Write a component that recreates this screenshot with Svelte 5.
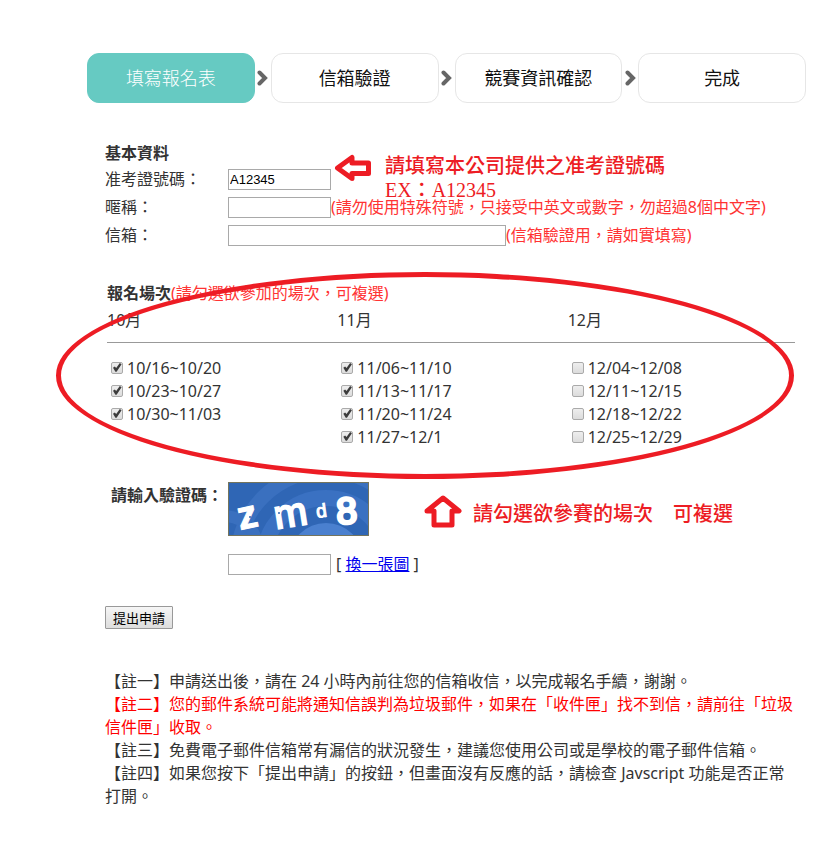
<script>
	const steps = ['填寫報名表', '信箱驗證', '競賽資訊確認', '完成'];

	let examNo = 'A12345';
	let nickname = '';
	let email = '';
	let captcha = '';

	let months = [
		{
			name: '10月',
			sessions: [
				{ label: '10/16~10/20', checked: true },
				{ label: '10/23~10/27', checked: true },
				{ label: '10/30~11/03', checked: true }
			]
		},
		{
			name: '11月',
			sessions: [
				{ label: '11/06~11/10', checked: true },
				{ label: '11/13~11/17', checked: true },
				{ label: '11/20~11/24', checked: true },
				{ label: '11/27~12/1', checked: true }
			]
		},
		{
			name: '12月',
			sessions: [
				{ label: '12/04~12/08', checked: false },
				{ label: '12/11~12/15', checked: false },
				{ label: '12/18~12/22', checked: false },
				{ label: '12/25~12/29', checked: false }
			]
		}
	];

	// \uff0c is the full-width comma
	const notes = [
		{
			text: '【註一】申請送出後\uff0c請在 24 小時內前往您的信箱收信\uff0c以完成報名手續\uff0c謝謝。'
		},
		{
			text: '【註二】您的郵件系統可能將通知信誤判為垃圾郵件\uff0c如果在「收件匣」找不到信\uff0c請前往「垃圾信件匣」收取。',
			important: true
		},
		{
			text: '【註三】免費電子郵件信箱常有漏信的狀況發生\uff0c建議您使用公司或是學校的電子郵件信箱。'
		},
		{
			text: '【註四】如果您按下「提出申請」的按鈕\uff0c但畫面沒有反應的話\uff0c請檢查 Javscript 功能是否正常打開。'
		}
	];
</script>

<main lang="zh-Hant">
	<ol class="steps">
		{#each steps as step, i}
			{#if i > 0}
				<li class="chevron" aria-hidden="true">
					<svg width="11" height="16" viewBox="0 0 11 16">
						<path d="M2.5 2.5 L8 8 L2.5 13.5" />
					</svg>
				</li>
			{/if}
			<li class="step" class:active={i === 0}>{step}</li>
		{/each}
	</ol>

	<form on:submit|preventDefault>
		<section class="basic">
			<h2>基本資料</h2>
			<div class="row">
				<label for="exam">准考證號碼&#xff1a;</label>
				<input id="exam" class="text" type="text" bind:value={examNo} />
			</div>
			<div class="row">
				<label for="nick">暱稱&#xff1a;</label>
				<input id="nick" class="text" type="text" bind:value={nickname} />
				<span class="hint">(請勿使用特殊符號&#xff0c;只接受中英文或數字&#xff0c;勿超過8個中文字)</span>
			</div>
			<div class="row">
				<label for="email">信箱&#xff1a;</label>
				<input id="email" class="text wide" type="text" bind:value={email} />
				<span class="hint">(信箱驗證用&#xff0c;請如實填寫)</span>
			</div>

			<div class="callout exam-callout">
				<svg width="37" height="28" viewBox="0 0 37 28">
					<path d="M3.5 14 L18 3.5 V9 H34.5 V19.5 H18 V24.5 Z" />
				</svg>
				<p>請填寫本公司提供之准考證號碼<br />EX&#xff1a;A12345</p>
			</div>
		</section>

		<section class="sessions">
			<h2>報名場次<span class="hint">(請勾選欲參加的場次&#xff0c;可複選)</span></h2>
			<div class="months">
				{#each months as month}
					<span>{month.name}</span>
				{/each}
			</div>
			<hr />
			<div class="months">
				{#each months as month}
					<div class="dates">
						{#each month.sessions as session}
							<label>
								<input type="checkbox" bind:checked={session.checked} />
								{session.label}
							</label>
						{/each}
					</div>
				{/each}
			</div>
			<div class="circle"></div>
		</section>

		<section class="verify">
			<div class="row top">
				<label class="verify-label" for="captcha">請輸入驗證碼&#xff1a;</label>
				<svg class="captcha" width="141" height="54" viewBox="0 0 141 54">
					<defs>
						<clipPath id="frame"><rect width="141" height="54" /></clipPath>
					</defs>
					<rect width="141" height="54" fill="#2f66b5" />
					<g clip-path="url(#frame)" fill="none">
						<circle cx="98" cy="78" r="89" stroke="#3a70bf" stroke-width="14" />
						<circle cx="98" cy="78" r="62" stroke="#3a71c2" stroke-width="16" />
						<circle cx="98" cy="78" r="37" fill="#4a80cf" />
						<circle cx="-4" cy="68" r="34" stroke="#3a70bf" stroke-width="12" />
					</g>
					<g class="letters">
						<text x="12" y="48" font-size="40" transform="rotate(-12 12 48)">z</text>
						<text class="thin" x="48" y="47" font-size="40" transform="rotate(-9 48 47)">m</text>
						<text class="small" x="89" y="36" font-size="19" transform="rotate(-8 89 36)">d</text>
						<text class="thick" x="109" y="42" font-size="37" transform="rotate(-3 109 42)">8</text>
					</g>
					<circle cx="22" cy="35" r="1" fill="#2e64b0" />
					<circle cx="51" cy="31" r="1" fill="#2e64b0" />
					<rect x="0.5" y="0.5" width="140" height="53" fill="none" stroke="#74745c" />
				</svg>
				<div class="callout verify-callout">
					<svg width="38" height="33" viewBox="0 0 38 33">
						<path d="M19 3 L35 16 H28 V30 H10 V16 H3 Z" />
					</svg>
					<p>請勾選欲參賽的場次&#x3000;可複選</p>
				</div>
			</div>
			<div class="row code">
				<input id="captcha" class="text" type="text" bind:value={captcha} />
				<span class="swap">[ <a href="#refresh">換一張圖</a> ]</span>
			</div>
		</section>

		<button type="submit">提出申請</button>
	</form>

	<div class="notes">
		{#each notes as note}
			<p class:important={note.important}>{note.text}</p>
		{/each}
	</div>
</main>

<style>
	:global(body) {
		margin: 0;
		background: #fff;
	}

	main {
		box-sizing: border-box;
		max-width: 960px;
		padding: 53px 31px 32px 87px;
		font-family: 'Noto Sans', 'Noto Sans CJK TC', sans-serif;
		font-size: 16px;
		line-height: 23px;
		color: #333;
		text-spacing-trim: space-all;
	}

	.steps {
		display: flex;
		align-items: center;
		margin: 0;
		padding: 0;
		list-style: none;
	}

	.step {
		box-sizing: border-box;
		flex: 1;
		height: 50px;
		border: 1px solid #e6e6e6;
		border-radius: 12px;
		font-family: 'Noto Sans CJK TC', sans-serif;
		font-size: 18px;
		line-height: 46px;
		color: #111;
		text-align: center;
	}

	.step.active {
		background: #66cac2;
		border-color: #66cac2;
		color: #fff;
		font-weight: 300;
	}

	.chevron {
		display: flex;
		justify-content: center;
		width: 16px;
	}

	.chevron path {
		fill: none;
		stroke: #666;
		stroke-width: 4;
		stroke-linecap: round;
	}

	form {
		padding: 38px 11px 0 18px;
	}

	h2 {
		margin: 0;
		font-size: 16px;
		line-height: 24px;
		font-weight: 700;
	}

	.hint {
		color: #f33;
		font-weight: 400;
		white-space: nowrap;
	}

	.basic {
		position: relative;
	}

	.row {
		display: flex;
		align-items: center;
		height: 28px;
	}

	.row > label {
		flex: none;
		width: 123px;
	}

	.text {
		box-sizing: border-box;
		width: 103px;
		height: 21px;
		padding: 1px;
		border: 1px solid #a9a9a9;
		font-family: 'Liberation Sans', sans-serif;
		font-size: 13px;
		color: #000;
	}

	.text.wide {
		width: 278px;
	}

	.callout {
		display: flex;
		color: #ed1c24;
		font-family: 'Liberation Serif', 'Noto Sans CJK TC', serif;
		font-size: 20px;
		line-height: 24px;
		font-weight: 500;
		white-space: nowrap;
	}

	.callout p {
		margin: 0;
	}

	.callout path {
		fill: #fff;
		stroke: #ed1c24;
		stroke-width: 5;
		stroke-linejoin: round;
	}

	.exam-callout {
		position: absolute;
		top: 13px;
		left: 229px;
		gap: 14px;
		pointer-events: none;
	}

	.sessions {
		position: relative;
		margin-top: 32px;
		padding-left: 2px;
	}

	.months {
		display: grid;
		grid-template-columns: repeat(3, 1fr);
		column-gap: 3px;
		padding-top: 4px;
	}

	hr {
		margin: 10px 0;
		border: 0;
		border-top: 1px solid #999;
	}

	.dates {
		display: flex;
		flex-direction: column;
	}

	.dates label {
		display: flex;
		align-items: center;
		gap: 4px;
		padding-left: 4px;
	}

	.dates input {
		appearance: none;
		box-sizing: border-box;
		width: 12px;
		height: 12px;
		margin: 0 0 2px;
		border: 1px solid #aaa;
		border-radius: 2px;
		background: linear-gradient(#eee, #dcdcdc);
	}

	.dates input:checked::after {
		content: '';
		display: block;
		width: 10px;
		height: 10px;
		background: #3c3c3c;
		clip-path: polygon(10% 52%, 28% 40%, 42% 56%, 78% 6%, 96% 18%, 46% 92%, 34% 92%);
	}

	/* hand drawn ring around the whole block */
	.circle {
		position: absolute;
		top: -9px;
		bottom: -30px;
		left: -49px;
		right: 1px;
		border: 5px solid #ed1c24;
		border-radius: 50%;
		pointer-events: none;
	}

	.verify {
		margin-top: 33px;
	}

	.row.top {
		align-items: flex-start;
		height: 54px;
	}

	.row > .verify-label {
		box-sizing: border-box;
		padding: 2px 5px 0 0;
		font-weight: 700;
		text-align: right;
	}

	.captcha {
		flex: none;
		overflow: visible;
	}

	.letters {
		fill: #fff;
		stroke: #fff;
		font-family: 'Liberation Sans', sans-serif;
		font-weight: 700;
	}

	.letters .thin {
		stroke-width: 2;
		font-weight: 400;
	}

	.letters .thick {
		stroke-width: 3;
		font-weight: 400;
	}

	.letters .small {
		font-weight: 400;
	}

	.verify-callout {
		align-items: center;
		gap: 11px;
		margin: 13px 0 0 55px;
	}

	.verify-callout p {
		padding-top: 4px;
	}

	.row.code {
		margin-top: 14px;
		padding-left: 123px;
	}

	.swap {
		padding-left: 5px;
	}

	a {
		color: #00e;
	}

	button {
		box-sizing: border-box;
		display: block;
		height: 23px;
		margin-top: 28px;
		padding: 0 7px;
		border: 1px solid #999;
		border-radius: 1px;
		background: linear-gradient(#f6f6f6, #ddd);
		font-family: 'Noto Sans CJK TC', sans-serif;
		font-size: 13px;
		line-height: 20px;
		color: #000;
	}

	.notes {
		padding: 41px 11px 0 18px;
	}

	.notes p {
		margin: 0;
	}

	.notes .important {
		color: #f00;
	}
</style>
